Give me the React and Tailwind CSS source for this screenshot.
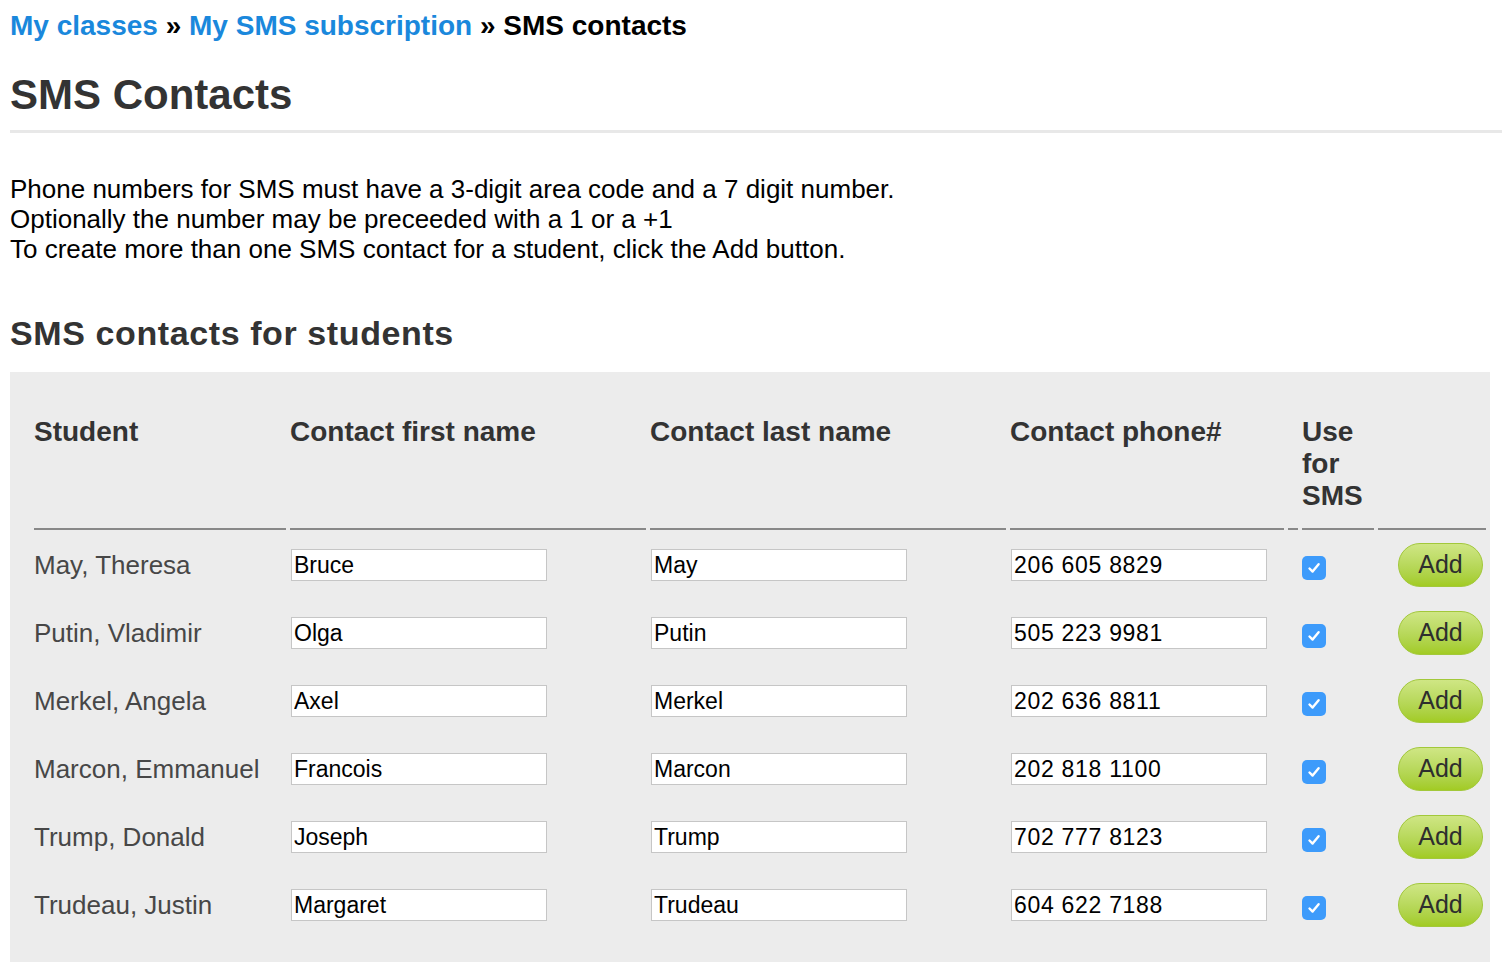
import React from 'react';

const rows = [
	{ student: 'May, Theresa', first: 'Bruce', last: 'May', phone: '206 605 8829' },
	{ student: 'Putin, Vladimir', first: 'Olga', last: 'Putin', phone: '505 223 9981' },
	{ student: 'Merkel, Angela', first: 'Axel', last: 'Merkel', phone: '202 636 8811' },
	{ student: 'Marcon, Emmanuel', first: 'Francois', last: 'Marcon', phone: '202 818 1100' },
	{ student: 'Trump, Donald', first: 'Joseph', last: 'Trump', phone: '702 777 8123' },
	{ student: 'Trudeau, Justin', first: 'Margaret', last: 'Trudeau', phone: '604 622 7188' },
];

const font = { fontFamily: '"Liberation Sans", Arial, Helvetica, sans-serif' };

const Check = () => (
	<div className="mt-[6px] flex h-[24px] w-[24px] items-center justify-center rounded-[5px] bg-[#3d9bfb]">
		<svg width="16" height="16" viewBox="0 0 16 16">
			<path d="M3.5 8.5 L6.6 11.6 L12.6 4.2" fill="none" stroke="white" strokeWidth="2.4" strokeLinecap="round" strokeLinejoin="round" />
		</svg>
	</div>
);

const Field = ({ value, digits }) => (
	<input
		type="text"
		defaultValue={value}
		className={digits
			? "ml-[1px] h-[32px] w-[256px] border border-[#c6c6c6] bg-white px-[2px] text-[23px] tracking-[0.7px] text-black outline-none"
			: "ml-[1px] h-[32px] w-[256px] border border-[#c6c6c6] bg-white px-[2px] text-[23px] text-black outline-none"}
		style={font}
	/>
);

const App = () => {
	return (
		<div className="min-h-screen bg-white pl-[10px]" style={font}>
			<div className="pt-[10px] text-[28px] font-bold leading-[32px] text-black">
				<a className="text-[#1a88dc]">My classes</a> » <a className="text-[#1a88dc]">My SMS subscription</a> » SMS contacts
			</div>
			<h1 className="mt-[29px] text-[42px] font-bold leading-[48px] text-[#333]">SMS Contacts</h1>
			<div className="mt-[11px] h-[3px] bg-[#e8e8e8]" />
			<div className="mt-[41px] text-[26px] leading-[30px] text-black">
				<p>Phone numbers for SMS must have a 3-digit area code and a 7 digit number.</p>
				<p>Optionally the number may be preceeded with a 1 or a +1</p>
				<p>To create more than one SMS contact for a student, click the Add button.</p>
			</div>
			<h2 className="mt-[49px] text-[34px] font-bold leading-[40px] tracking-[0.6px] text-[#333]">SMS contacts for students</h2>
			<div className="mt-[19px] w-[1480px] bg-[#ececec] pb-[24px] pl-5 pt-[44px]">
				<table className="table-fixed border-separate border-spacing-x-1 border-spacing-y-0">
					<colgroup>
						<col className="w-[252px]" />
						<col className="w-[356px]" />
						<col className="w-[356px]" />
						<col className="w-[274px]" />
						<col className="w-[10px]" />
						<col className="w-[72px]" />
						<col className="w-[108px]" />
					</colgroup>
					<thead>
						<tr className="text-left align-top text-[28px] font-bold leading-[32px] text-[#333]">
							<th className="border-b-2 border-[#888] pb-[16px]">Student</th>
							<th className="border-b-2 border-[#888] pb-[16px]">Contact first name</th>
							<th className="border-b-2 border-[#888] pb-[16px]">Contact last name</th>
							<th className="border-b-2 border-[#888] pb-[16px]">Contact phone#</th>
							<th className="border-b-2 border-[#888] pb-[16px]"></th>
							<th className="border-b-2 border-[#888] pb-[16px]">Use for SMS</th>
							<th className="border-b-2 border-[#888] pb-[16px]"></th>
						</tr>
					</thead>
					<tbody>
						{rows.map((r) => (
							<tr key={r.student} className="h-[68px] align-middle">
								<td className="whitespace-nowrap pt-[2px] text-[26px] text-[#474747]">{r.student}</td>
								<td className="pt-[2px]"><Field value={r.first} /></td>
								<td className="pt-[2px]"><Field value={r.last} /></td>
								<td className="pt-[2px]"><Field value={r.phone} digits /></td>
								<td></td>
								<td className="pt-[2px]"><Check /></td>
								<td className="pt-[2px]">
									<button className="ml-[20px] h-[44px] w-[85px] rounded-full border border-[#a2c83a] bg-gradient-to-b from-[#cfe684] to-[#a2cb22] text-[25px] text-[#2e2e2e]">
										Add
									</button>
								</td>
							</tr>
						))}
					</tbody>
				</table>
			</div>
		</div>
	);
};

export default App;
